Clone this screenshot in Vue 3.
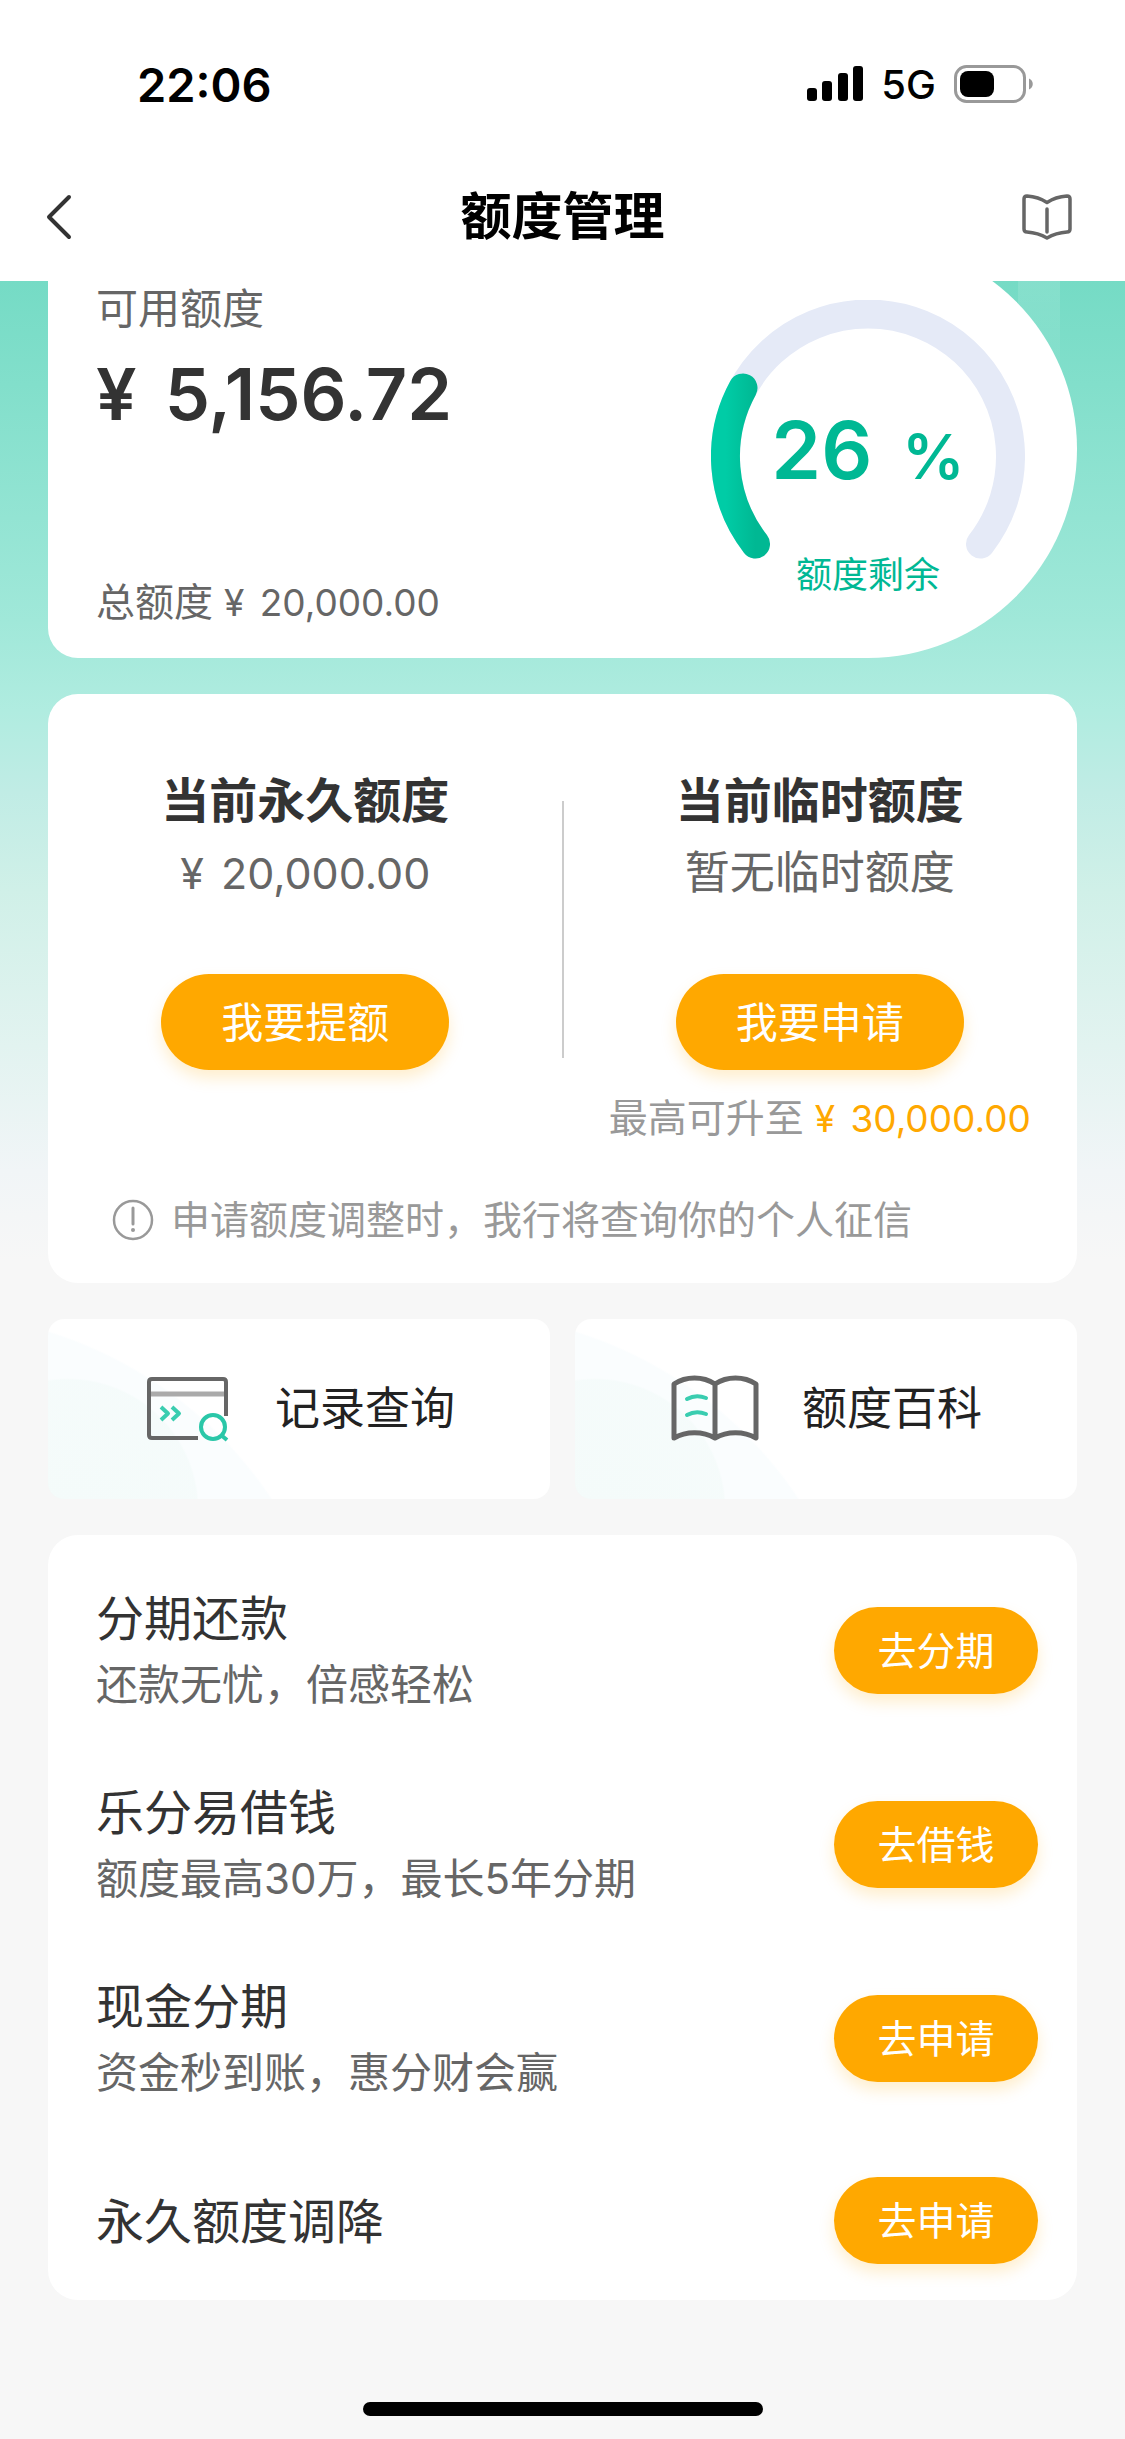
<script setup>
const gauge = { percent: 26, label: '额度剩余' }

const limits = [
  { title: '当前永久额度', money: '20,000.00', action: '我要提额' },
  { title: '当前临时额度', value: '暂无临时额度', action: '我要申请', hint: '最高可升至', hintMoney: '30,000.00' },
]

const services = [
  { title: '分期还款', desc: '还款无忧，倍感轻松', action: '去分期' },
  { title: '乐分易借钱', desc: '额度最高30万，最长5年分期', action: '去借钱' },
  { title: '现金分期', desc: '资金秒到账，惠分财会赢', action: '去申请' },
  { title: '永久额度调降', desc: '', action: '去申请' },
]
</script>

<template>
  <div class="page" lang="zh-CN">
    <header class="header">
      <div class="status">
        <span class="time">22:06</span>
        <div class="signals">
          <svg width="56" height="36" viewBox="0 0 56 36" aria-hidden="true">
            <rect x="0" y="22" width="10" height="13" rx="3" />
            <rect x="15" y="15" width="10" height="20" rx="3" />
            <rect x="31" y="7" width="10" height="28" rx="3" />
            <rect x="46" y="0" width="10" height="35" rx="3" />
          </svg>
          <span class="network">5G</span>
          <svg width="80" height="38" viewBox="0 0 80 38" aria-hidden="true">
            <rect x="1.5" y="1.5" width="69" height="35" rx="11" fill="none" stroke="#999" stroke-width="3" />
            <rect x="6" y="6" width="34" height="26" rx="8" />
            <path d="M75 13.500c5 2 5 9 0 11z" fill="#999" />
          </svg>
        </div>
      </div>
      <nav class="nav">
        <button class="icon-button back" type="button" aria-label="返回">
          <svg width="28" height="48" viewBox="0 0 28 48" fill="none" stroke="#333" stroke-width="4" stroke-linecap="round" stroke-linejoin="round">
            <path d="M24 4L4 24l20 20" />
          </svg>
        </button>
        <h1>额度管理</h1>
        <button class="icon-button" type="button" aria-label="帮助手册">
          <svg width="52" height="48" viewBox="0 0 52 48" fill="none" stroke="#666" stroke-width="3.500" stroke-linecap="round" stroke-linejoin="round">
            <path d="M26 9.500C20 5.500 13 3.500 6 3Q3 3 3 6v30q0 3 3 3c7 0.500 14 2.500 20 6 6-3.500 13-5.500 20-6q3 0 3-3V6q0-3-3-3C39 3.500 32 5.500 26 9.500z" />
            <path d="M26 16v23" />
          </svg>
        </button>
      </nav>
    </header>

    <main class="content">
      <section class="card summary">
        <div class="balance">
          <p class="label">可用额度</p>
          <p class="amount"><span class="yen">¥</span> 5,156.72</p>
          <p class="total">总额度 <span class="money"><span class="yen">¥</span> 20,000.00</span></p>
        </div>
        <div class="gauge">
          <svg viewBox="0 0 314 314" fill="none" stroke-width="29" stroke-linecap="round" aria-hidden="true">
            <defs>
              <linearGradient id="gauge-fill" x1="0" y1="0" x2="1" y2="0">
                <stop offset="0" stop-color="#00cca6" />
                <stop offset="1" stop-color="#00b893" />
              </linearGradient>
            </defs>
            <path d="M44.500 244A142.500 142.500 0 1 1 269.500 244" stroke="#e5eaf7" />
            <path d="M44.500 244A142.500 142.500 0 0 1 32 88" stroke="url(#gauge-fill)" />
          </svg>
          <div class="gauge-text">
            <p class="percent">{{ gauge.percent }}<span>%</span></p>
            <p class="gauge-label">{{ gauge.label }}</p>
          </div>
        </div>
      </section>

      <section class="card limits">
        <div class="columns">
          <div v-for="limit in limits" :key="limit.title" class="column">
            <h2>{{ limit.title }}</h2>
            <p v-if="limit.money" class="value money"><span class="yen">¥</span> {{ limit.money }}</p>
            <p v-else class="value">{{ limit.value }}</p>
            <button class="pill large" type="button">{{ limit.action }}</button>
            <p v-if="limit.hint" class="hint">
              {{ limit.hint }} <span class="money"><span class="yen">¥</span> {{ limit.hintMoney }}</span>
            </p>
          </div>
        </div>
        <p class="notice">
          <svg width="42" height="42" viewBox="0 0 42 42" fill="none" stroke="#999" stroke-width="2.500" aria-hidden="true">
            <circle cx="21" cy="21" r="19" />
            <path d="M21 9v16" stroke-width="3" stroke-linecap="round" />
            <circle cx="21" cy="31" r="2" fill="#999" stroke="none" />
          </svg>
          申请额度调整时，我行将查询你的个人征信
        </p>
      </section>

      <div class="shortcuts">
        <a class="shortcut" href="#records">
          <svg width="90" height="72" viewBox="0 0 90 72" fill="none" stroke-linejoin="round" aria-hidden="true">
            <path d="M6 21h76" stroke="#aaa" stroke-width="5" />
            <path d="M55 65H9q-3 0-3-3V9q0-3 3-3h71q3 0 3 3v34" stroke="#666" stroke-width="4" />
            <path d="M18 34l7 6.500-7 6.500M29 34l7 6.500-7 6.500" stroke="#3acdb0" stroke-width="4" />
            <circle cx="70" cy="54" r="12" stroke="#2ac7a8" stroke-width="4" />
            <path d="M78 62l6 5" stroke="#2ac7a8" stroke-width="4" />
          </svg>
          <span>记录查询</span>
        </a>
        <a class="shortcut" href="#wiki">
          <svg width="90" height="72" viewBox="0 0 90 72" fill="none" stroke-linejoin="round" stroke-linecap="round" aria-hidden="true">
            <path d="M45 11C33 3 16 3 4 11v54c12-7 29-7 41 0 12-7 29-7 41 0V11C74 3 57 3 45 11zM45 11v54" stroke="#666" stroke-width="5" />
            <path d="M17 26q9-5 19-1M17 42q9-5 19-1" stroke="#3acdb0" stroke-width="4" />
          </svg>
          <span>额度百科</span>
        </a>
      </div>

      <ul class="card services">
        <li v-for="service in services" :key="service.title">
          <div class="service-text">
            <h3>{{ service.title }}</h3>
            <p v-if="service.desc">{{ service.desc }}</p>
          </div>
          <button class="pill" type="button">{{ service.action }}</button>
        </li>
      </ul>
    </main>

    <div class="home-indicator"></div>
  </div>
</template>

<style>
body {
  margin: 0;
  background: #f7f7f7;
}
</style>

<style scoped>
.page {
  display: flex;
  flex-direction: column;
  min-height: 100vh;
  font-family: Inter, "Noto Sans CJK SC", sans-serif;
  color: #333;
}

h1, h2, h3, p, ul {
  margin: 0;
  padding: 0;
}

svg {
  display: block;
  flex: none;
}

button {
  padding: 0;
  border: 0;
  background: none;
  font: inherit;
}

.header {
  position: relative;
  z-index: 1;
  background: #fff;
}

.status {
  display: flex;
  align-items: center;
  justify-content: space-between;
  box-sizing: border-box;
  height: 152px;
  padding: 16px 91px 0 137px;
  color: #000;
}

.time {
  font-size: 47px;
  font-weight: 600;
}

.signals {
  display: flex;
  align-items: center;
  gap: 18px;
}

.network {
  font-size: 40px;
  font-weight: 500;
}

.nav {
  display: flex;
  align-items: center;
  justify-content: space-between;
  height: 129px;
  padding: 0 52px 0 45px;
}

.icon-button {
  display: flex;
  width: 52px;
}

.icon-button.back {
  width: 59px;
}

.nav h1 {
  font-size: 51px;
  font-weight: 700;
  line-height: 72px;
  color: #000;
}

.content {
  display: flex;
  flex-direction: column;
  gap: 36px;
  padding: 0 48px;
  background:
    linear-gradient(#ffffff1f, #ffffff00) right 65px top / 42px 120px no-repeat,
    linear-gradient(#75dbc5 0, #a0e8d9 340px, #b0ece0 430px, #c0ece5 510px, #d0f0e8 610px, #e2f3f0 765px, #f1f5f7 890px, #f7f7f7 980px);
}

.card {
  border-radius: 30px;
  background: #fff;
}

/* The first card is scrolled partly under the header. */
.summary {
  display: flex;
  justify-content: space-between;
  margin-top: -41px;
  padding: 42px 52px 28px 48px;
  border-radius: 30px 209px 209px 30px;
}

.balance {
  display: flex;
  flex-direction: column;
  color: #666;
}

.label {
  font-size: 42px;
  line-height: 54px;
}

.amount {
  margin-top: 16px;
  font-size: 72px;
  font-weight: 600;
  line-height: 84px;
  color: #333;
}

.yen {
  margin-right: 5px;
}

.amount .yen {
  margin-right: 10px;
}

.total {
  margin-top: auto;
  font-size: 39px;
  line-height: 54px;
}

.total .money,
.hint .money {
  font-size: 37px;
}

.gauge {
  display: grid;
  width: 314px;
  margin: 18px 0 16px;
  color: #00b894;
}

.gauge > * {
  grid-area: 1 / 1;
}

.gauge-text {
  padding-top: 102px;
  text-align: center;
}

.percent {
  font-size: 80px;
  font-weight: 600;
  line-height: 96px;
}

.percent span {
  margin-left: 30px;
  font-size: 62px;
}

.gauge-label {
  margin-top: 43px;
  font-size: 36px;
  line-height: 54px;
}

.limits {
  padding: 74px 0 36px;
}

.columns {
  display: grid;
  grid-template-columns: 1fr 1fr;
  background: linear-gradient(#ccc, #ccc) center 33px / 2px 257px no-repeat;
}

.column {
  display: flex;
  flex-direction: column;
  align-items: center;
}

.column h2 {
  font-size: 48px;
  font-weight: 700;
  line-height: 66px;
}

.value {
  margin-top: 6px;
  font-size: 45px;
  line-height: 66px;
  color: #666;
}

.value.money {
  font-size: 43px;
}

.pill {
  flex: none;
  width: 204px;
  height: 87px;
  padding-bottom: 5px;
  border-radius: 48px;
  background: #ffa800;
  box-shadow: 0 8px 16px #ffa80033;
  font-size: 39px;
  color: #fff;
}

.pill.large {
  width: 288px;
  height: 96px;
  margin-top: 68px;
  font-size: 42px;
}

.hint {
  margin-top: 21px;
  font-size: 39px;
  line-height: 54px;
  color: #999;
}

.hint .money {
  color: #ffa800;
}

.notice {
  display: flex;
  align-items: center;
  gap: 17px;
  margin-top: 47px;
  padding-left: 64px;
  font-size: 39px;
  line-height: 54px;
  color: #999;
}

.shortcuts {
  display: grid;
  grid-template-columns: 1fr 1fr;
  gap: 25px;
}

.shortcut {
  display: flex;
  align-items: center;
  justify-content: center;
  gap: 42px;
  height: 180px;
  border-radius: 16px;
  background:
    radial-gradient(circle at 20px 190px, #f4fbfa 0, #f4fbfacc 129px, transparent 131px),
    radial-gradient(circle at -123px 410px, #fafdfe 415px, transparent 417px),
    #fff;
  font-size: 45px;
  line-height: 60px;
  color: #222;
  text-decoration: none;
}

.services {
  display: flex;
  flex-direction: column;
  gap: 58px;
  padding: 47px 39px 24px 48px;
  list-style: none;
}

.services li {
  display: flex;
  align-items: center;
  justify-content: space-between;
  min-height: 112px;
}

.service-text {
  padding-top: 4px;
}

.services h3 {
  font-size: 48px;
  font-weight: 400;
  line-height: 66px;
}

.services p {
  font-size: 42px;
  line-height: 66px;
  color: #666;
}

.home-indicator {
  width: 400px;
  height: 14px;
  margin: auto auto 23px;
  border-radius: 7px;
  background: #000;
}
</style>
